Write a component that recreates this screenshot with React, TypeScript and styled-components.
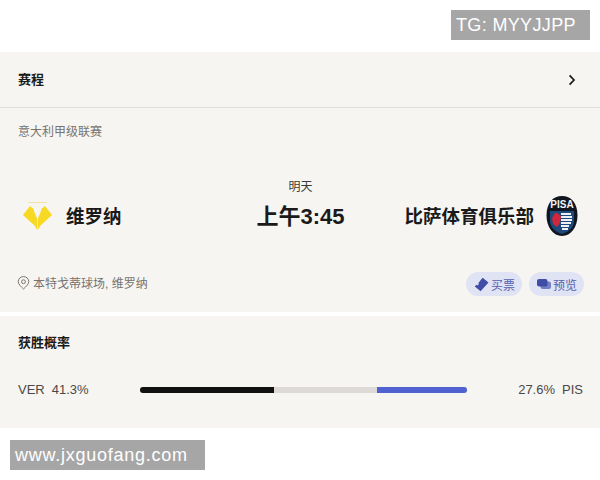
import React from 'react';
import styled, { createGlobalStyle } from 'styled-components';

const GlobalStyle = createGlobalStyle`
  html, body {
    margin: 0;
    padding: 0;
    background: #fff;
    font-family: "Liberation Sans", "Noto Sans CJK SC", sans-serif;
  }
`;

const VeronaLogo = () => (
  <svg width="32" height="32" viewBox="0 0 32 32">
    <path d="M6 2.500h19" stroke="#efe08a" strokeWidth="0.8" fill="none" />
    <path d="M1 15C3 12 6 9 8 6 9 7 11 8 11.500 9 12 12 14 15 15.200 19V30L12.500 25.500C9 22 5 19 1 15Z" fill="#f7d923" />
    <path d="M30 15C28 12 25 9 23 6 22 7 20 8 19.500 9 19 12 17 15 15.800 19V30L18.500 25.500C22 22 26 19 30 15Z" fill="#f7d923" />
  </svg>
);

const PisaLogo = () => (
  <svg width="34" height="42" viewBox="0 0 34 42">
    <path d="M17 1C26 1 32.500 8 32.500 20.500 32.500 32 26 41 17 41 8 41 1.500 32 1.500 20.500 1.500 8 8 1 17 1Z" fill="#10151f" />
    <path d="M5 16h24v10c0 6-5 11-12 13C10 37 5 32 5 26Z" fill="#1d4a7c" />
    <text x="17" y="13" textAnchor="middle" fontSize="10" fontWeight="700" fill="#f2f2f2" fontFamily="Liberation Sans, sans-serif">PISA</text>
    <path d="M12 18h-2l-3 5 1 6 4 3 3-4 1-7Z" fill="#d2273b" />
    <path d="M16 19h10M16 22h11M16 25h11M16 28h10M16 31h8M17 34h6" stroke="#eef0f3" strokeWidth="2" fill="none" />
  </svg>
);

const PinIcon = () => (
  <svg width="13" height="14" viewBox="0 0 13 14" fill="none" stroke="#77736f" strokeWidth="1">
    <path d="M6.500 13C4 10.500 1.200 8.200 1.200 5.600a5.300 5 0 0 1 10.600 0C11.800 8.200 9 10.500 6.500 13Z" />
    <circle cx="6.500" cy="5.700" r="1.900" />
  </svg>
);

const TicketIcon = () => (
  <svg width="15" height="15" viewBox="0 0 15 15">
    <path d="M8.600 .8 14.500 5.400 6.600 14.200 .8 9.600 2.400 7.800a1.300 1.300 0 0 0 2-1.700Z" fill="#3f4da6" />
  </svg>
);

const PreviewIcon = () => (
  <svg width="14" height="12" viewBox="0 0 14 12">
    <rect x="3.500" y="3.500" width="10.500" height="7.500" rx="2" fill="#7480c6" />
    <rect x="0" y="1" width="10.500" height="7.500" rx="2" fill="#3f4da6" />
  </svg>
);

const ChevronIcon = () => (
  <svg width="8" height="12" viewBox="0 0 8 12" fill="none" stroke="#1a1a1a" strokeWidth="1.700">
    <path d="M1.600 1.400 6 6 1.600 10.600" />
  </svg>
);

const Page = styled.div`
  width: 600px;
  height: 480px;
  overflow: hidden;
  background: #fff;
  display: flex;
  flex-direction: column;
`;

const TopBand = styled.div`
  height: 52px;
  box-sizing: border-box;
  padding: 10px 10px 0 0;
  display: flex;
  justify-content: flex-end;
`;

const Watermark = styled.div<{ $width: number; $spacing: number }>`
  width: ${p => p.$width}px;
  height: 30px;
  box-sizing: border-box;
  padding-left: 5px;
  background: #a6a6a6;
  color: #fff;
  font-size: 18px;
  line-height: 30px;
  letter-spacing: ${p => p.$spacing}px;
  white-space: nowrap;
`;

const Card = styled.section`
  background: #f7f5f1;
`;

const FixtureCard = styled(Card)`
  height: 260px;
  display: flex;
  flex-direction: column;
`;

const CardHead = styled.div`
  height: 56px;
  box-sizing: border-box;
  padding: 0 24px 0 18px;
  display: flex;
  align-items: center;
  justify-content: space-between;
  border-bottom: 1px solid #dfdcd9;
`;

const Title = styled.h2`
  margin: 0;
  font-size: 13px;
  line-height: 16px;
  font-weight: 700;
  color: #1a1a1a;
`;

const League = styled.div`
  padding: 16px 18px 0;
  font-size: 12px;
  line-height: 16px;
  color: #77736f;
`;

const Match = styled.div`
  margin-top: 39px;
  padding: 0 21px 0 22px;
  display: grid;
  grid-template-columns: 1fr auto 1fr;
  align-items: end;
`;

const Team = styled.div<{ $right?: boolean }>`
  height: 42px;
  display: flex;
  align-items: center;
  gap: ${p => (p.$right ? '11px' : '12px')};
  justify-content: ${p => (p.$right ? 'flex-end' : 'flex-start')};
`;

const TeamName = styled.span`
  margin-bottom: 2px;
  font-size: 18.500px;
  font-weight: 700;
  color: #1a1a1a;
  white-space: nowrap;
`;

const Kickoff = styled.div`
  display: flex;
  flex-direction: column;
  align-items: center;
  gap: 8px;
  margin-bottom: 6px;
`;

const Day = styled.span`
  font-size: 12px;
  line-height: 16px;
  color: #3c3a38;
`;

const Time = styled.span`
  font-size: 22px;
  line-height: 28px;
  font-weight: 700;
  color: #1a1a1a;
  white-space: nowrap;
`;

const InfoRow = styled.div`
  margin-top: auto;
  padding: 0 16px 16px 17px;
  display: flex;
  align-items: center;
  justify-content: space-between;
`;

const Venue = styled.div`
  padding-bottom: 3px;
  display: flex;
  align-items: center;
  gap: 3px;
  font-size: 12px;
  color: #77736f;
`;

const Actions = styled.div`
  display: flex;
  gap: 7px;
`;

const Pill = styled.div`
  height: 24px;
  padding: 0 7px 0 8px;
  display: flex;
  align-items: center;
  gap: 2px;
  border-radius: 12px;
  background: #e0e3f4;
  color: #5660ad;
  font-size: 12px;
`;

const Divider = styled.div`
  height: 4px;
  background: #fff;
`;

const ProbCard = styled(Card)`
  height: 112px;
  box-sizing: border-box;
  padding: 19px 17px 0 18px;
`;

const ProbRow = styled.div`
  margin-top: 31px;
  display: grid;
  grid-template-columns: 122px 327px 1fr;
  align-items: center;
  font-size: 13px;
  line-height: 16px;
  color: #4a4846;
`;

const Stat = styled.div<{ $right?: boolean }>`
  display: flex;
  gap: 7px;
  white-space: nowrap;
  justify-content: ${p => (p.$right ? 'flex-end' : 'flex-start')};
`;

const Bar = styled.div`
  height: 6px;
  display: flex;
  overflow: hidden;
  border-radius: 3px;
  background: #dcd9d6;
`;

const Segment = styled.div<{ $color: string }>`
  background: ${p => p.$color};
`;

const BottomBand = styled.div`
  padding: 12px 0 0 10px;
`;

export default function App() {
  return (
    <Page>
      <GlobalStyle />
      <TopBand>
        <Watermark $width={139} $spacing={0.35}>TG: MYYJJPP</Watermark>
      </TopBand>
      <FixtureCard>
        <CardHead>
          <Title>赛程</Title>
          <ChevronIcon />
        </CardHead>
        <League>意大利甲级联赛</League>
        <Match>
          <Team>
            <VeronaLogo />
            <TeamName>维罗纳</TeamName>
          </Team>
          <Kickoff>
            <Day>明天</Day>
            <Time>上午3:45</Time>
          </Kickoff>
          <Team $right>
            <TeamName>比萨体育俱乐部</TeamName>
            <PisaLogo />
          </Team>
        </Match>
        <InfoRow>
          <Venue>
            <PinIcon />
            本特戈蒂球场, 维罗纳
          </Venue>
          <Actions>
            <Pill>
              <TicketIcon />
              买票
            </Pill>
            <Pill>
              <PreviewIcon />
              预览
            </Pill>
          </Actions>
        </InfoRow>
      </FixtureCard>
      <Divider />
      <ProbCard>
        <Title>获胜概率</Title>
        <ProbRow>
          <Stat>
            <span>VER</span>
            <span>41.3%</span>
          </Stat>
          <Bar>
            <Segment $color="#111" style={{ width: '40.9%' }} />
            <Segment $color="#dcd9d6" style={{ width: '31.5%' }} />
            <Segment $color="#4f62cf" style={{ width: '27.6%' }} />
          </Bar>
          <Stat $right>
            <span>27.6%</span>
            <span>PIS</span>
          </Stat>
        </ProbRow>
      </ProbCard>
      <BottomBand>
        <Watermark $width={195} $spacing={0.75}>www.jxguofang.com</Watermark>
      </BottomBand>
    </Page>
  );
}
